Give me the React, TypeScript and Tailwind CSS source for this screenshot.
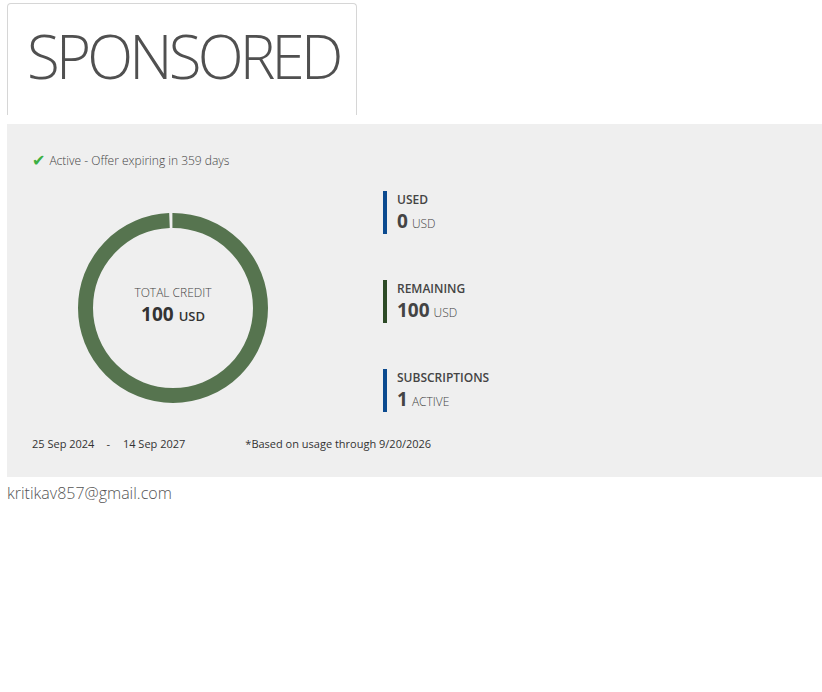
const STATS = [
  { label: "USED", value: "0", unit: "USD", bar: "bg-[#0b4a8f]" },
  { label: "REMAINING", value: "100", unit: "USD", bar: "bg-[#2d4a26]" },
  { label: "SUBSCRIPTIONS", value: "1", unit: "ACTIVE", bar: "bg-[#0b4a8f]" },
];

function Donut() {
  const r = 87.5;
  const c = 2 * Math.PI * r;
  return (
    <div className="relative w-[190px] h-[190px]">
      <svg width="190" height="190" viewBox="0 0 190 190">
        <circle
          cx="95"
          cy="95"
          r={r}
          fill="none"
          stroke="#56744f"
          strokeWidth="15"
          strokeDasharray={`${c - 3} 3`}
          strokeDashoffset={1.5}
          transform="rotate(-90 95 95)"
        />
      </svg>
      <div className="absolute inset-0 flex flex-col items-center justify-center pb-[6px]">
        <div className="text-[12px] font-light text-[#444] leading-none">TOTAL CREDIT</div>
        <div className="mt-[6px] leading-none text-[#333]">
          <span className="text-[19px] font-bold">100</span>
          <span className="text-[13px] font-semibold ml-[5px]">USD</span>
        </div>
      </div>
    </div>
  );
}

export default function App() {
  return (
    <div className="bg-white min-h-[692px] font-['Open_Sans',sans-serif] pt-[3px]">
      <div className="ml-[7px] w-[350px] h-[112px] border border-b-0 border-[#d6d6d6] rounded-t-[4px] pl-[19px] pt-[22px]">
        <h1 className="text-[60px] font-light text-[#505050] leading-none tracking-[-3.8px]">SPONSORED</h1>
      </div>

      <div className="mt-[9px] ml-[7px] w-[815px] h-[353px] bg-[#efefef] pt-[28px] pl-[25px] flex flex-col">
        <div className="flex items-center">
          <span className="font-['DejaVu_Sans',sans-serif] text-[16px] text-[#3cb043] leading-none">✔</span>
          <span className="ml-[4px] font-light text-[12px] text-[#444]">Active - Offer expiring in 359 days</span>
        </div>

        <div className="flex mt-[21px]">
          <div className="w-[351px] pl-[46px] pt-[22px]">
            <Donut />
          </div>
          <div className="flex flex-col gap-[46px]">
            {STATS.map((s) => (
              <div key={s.label} className="flex">
                <div className={`w-[4px] h-[43px] ${s.bar}`} />
                <div className="ml-[10px] pt-[1px]">
                  <div className="text-[12px] font-semibold text-[#444] leading-[16px]">{s.label}</div>
                  <div className="mt-[4px] leading-none text-[#444]">
                    <span className="text-[19px] font-bold">{s.value}</span>
                    <span className="text-[12px] font-light ml-[4px]">{s.unit}</span>
                  </div>
                </div>
              </div>
            ))}
          </div>
        </div>

        <div className="flex items-center text-[11px] text-[#333] mt-[24px]">
          <span>25 Sep 2024</span>
          <span className="ml-[12px]">-</span>
          <span className="ml-[13px]">14 Sep 2027</span>
          <span className="ml-[60px]">*Based on usage through 9/20/2026</span>
        </div>
      </div>

      <div className="ml-[7px] mt-[4px] text-[16px] font-light text-[#555]">kritikav857@gmail.com</div>
    </div>
  );
}
